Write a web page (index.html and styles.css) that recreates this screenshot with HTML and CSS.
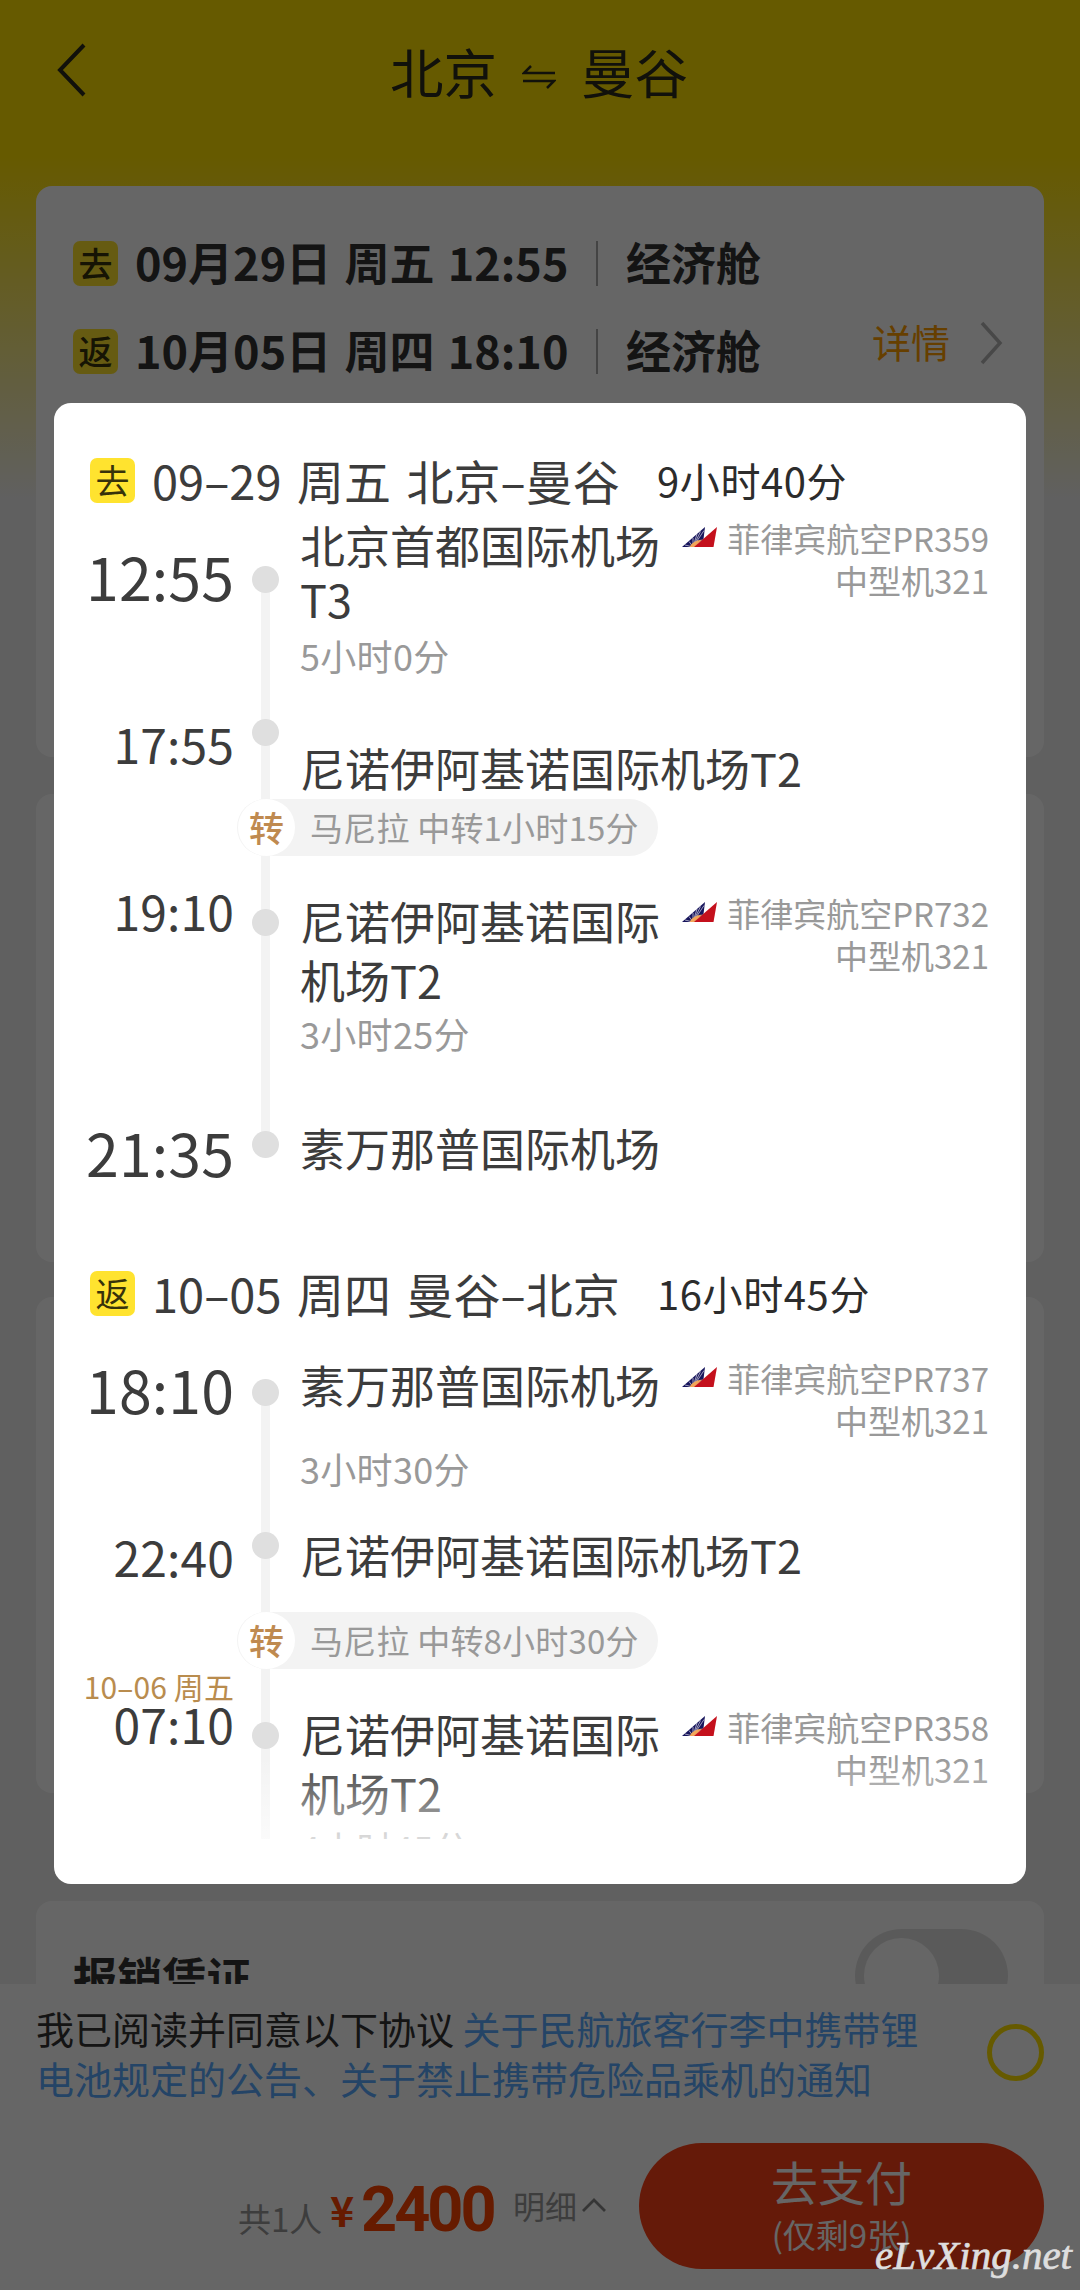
FILE: index.html
```html
<!DOCTYPE html>
<html lang="zh-CN">
<head>
<meta charset="utf-8">
<title>北京 ⇋ 曼谷</title>
<link rel="stylesheet" href="styles.css">
</head>
<body>
<svg class="defs" width="0" height="0" aria-hidden="true">
  <symbol id="pal" viewBox="0 0 35 20">
    <path d="M0 20 23 0 21.500 12 11 20z" fill="#17155c"/>
    <path d="M11 20 3 18M11 20 7 14.500M11 20 11 11M11 20 15 7M11 20 18.500 4.500M11 20 22 3.500" stroke="#fff" stroke-width=".6"/>
    <path d="M7.500 20q2.500-6 12.500-7.500L13 20z" fill="#f2a65a"/>
    <path d="M12 20 35 0 31.500 20z" fill="#c4101c"/>
  </symbol>
</svg>
<div class="page">
  <main class="scroll">
    <header class="topbar">
      <svg class="back" viewBox="0 0 30 54"><path d="M27 2 3 27l24 25"/></svg>
      <h1 class="title"><span>北京</span>
        <svg class="swap" viewBox="0 0 34 24"><path d="M33 8H2L9 1M1 16h31l-7 7"/></svg>
        <span>曼谷</span></h1>
    </header>
    <section class="card trips">
      <div class="trip-list">
        <div class="trip"><span class="tag">去</span><span class="trip-date">09月29日 周五 12:55</span><i class="bar"></i><span class="cabin">经济舱</span></div>
        <div class="trip"><span class="tag">返</span><span class="trip-date">10月05日 周四 18:10</span><i class="bar"></i><span class="cabin">经济舱</span></div>
      </div>
      <div class="detail">详情<svg viewBox="0 0 24 44"><path d="M2 2 20 22 2 42"/></svg></div>
    </section>
    <section class="card second"></section>
    <section class="card third"></section>
    <section class="card receipt"><h2>报销凭证</h2><div class="toggle"><i></i></div></section>
  </main>
  <footer class="footer">
    <div class="agree">
      <p><span>我已阅读并同意以下协议 </span><a>关于民航旅客行李中携带锂</a><br><a>电池规定的公告、关于禁止携带危险品乘机的通知</a></p>
      <i class="ring"></i>
    </div>
    <div class="pay">
      <span class="people">共1人</span>
      <span class="yen">¥</span>
      <span class="price">2400</span>
      <span class="breakdown">明细</span>
      <svg class="caret" viewBox="0 0 24 14"><path d="M1 13 12 2l11 11"/></svg>
      <div class="btn"><b>去支付</b><small>(仅剩9张)</small></div>
    </div>
  </footer>
</div>
<div class="mask"></div>

<section class="modal">
  <div class="itinerary">
    <div class="head"><span class="tag">去</span><span class="route">09–29 周五 北京–曼谷</span><span class="total">9小时40分</span></div>

    <div class="stop a1">
      <div class="time big">12:55</div>
      <div class="axis first"><i class="dot"></i></div>
      <div class="place tight"><p>北京首都国际机场<br>T3</p><p class="dur">5小时0分</p></div>
      <div class="flight"><p><svg class="logo"><use href="#pal"/></svg>菲律宾航空PR359</p><p>中型机321</p></div>
    </div>
    <div class="stop a2">
      <div class="time">17:55</div>
      <div class="axis"><i class="dot"></i></div>
      <div class="place wide"><p>尼诺伊阿基诺国际机场T2</p></div>
    </div>
    <div class="transfer"><b>转</b><span>马尼拉 中转1小时15分</span></div>
    <div class="stop a3">
      <div class="time">19:10</div>
      <div class="axis"><i class="dot"></i></div>
      <div class="place"><p>尼诺伊阿基诺国际机场T2</p><p class="dur">3小时25分</p></div>
      <div class="flight"><p><svg class="logo"><use href="#pal"/></svg>菲律宾航空PR732</p><p>中型机321</p></div>
    </div>
    <div class="stop a4">
      <div class="time big">21:35</div>
      <div class="axis last"><i class="dot"></i></div>
      <div class="place"><p>素万那普国际机场</p></div>
    </div>

    <div class="head"><span class="tag">返</span><span class="route">10–05 周四 曼谷–北京</span><span class="total">16小时45分</span></div>

    <div class="stop b1">
      <div class="time big">18:10</div>
      <div class="axis first"><i class="dot"></i></div>
      <div class="place"><p>素万那普国际机场</p><p class="dur">3小时30分</p></div>
      <div class="flight"><p><svg class="logo"><use href="#pal"/></svg>菲律宾航空PR737</p><p>中型机321</p></div>
    </div>
    <div class="stop b2">
      <div class="time">22:40</div>
      <div class="axis"><i class="dot"></i></div>
      <div class="place wide"><p>尼诺伊阿基诺国际机场T2</p></div>
    </div>
    <div class="transfer"><b>转</b><span>马尼拉 中转8小时30分</span></div>
    <div class="stop b3">
      <div class="time"><em>10–06 周五</em>07:10</div>
      <div class="axis"><i class="dot"></i></div>
      <div class="place"><p>尼诺伊阿基诺国际机场T2</p><p class="dur">4小时45分</p></div>
      <div class="flight"><p><svg class="logo"><use href="#pal"/></svg>菲律宾航空PR358</p><p>中型机321</p></div>
    </div>
    <div class="fade"></div>
  </div>
</section>
<div class="watermark">eLvXing.net</div>
</body>
</html>
```
FILE: styles.css
```css
* { box-sizing: border-box; }
body {
  margin: 0;
  position: relative;
  width: 1080px;
  height: 2290px;
  overflow: hidden;
  font-family: "Noto Sans CJK SC", sans-serif;
  color: #333;
}
h1, h2, p { margin: 0; font-weight: 400; }
i, em { font-style: normal; }
svg { fill: none; flex: none; }
.defs { position: absolute; }

/* order page */
.page { height: 2290px; display: flex; flex-direction: column; }
.scroll {
  height: 1984px;
  padding: 0 36px;
  overflow: hidden;
  background: linear-gradient(#ffe100 0, #ffe100 155px, #f1f1f1 500px);
}
.topbar { height: 186px; display: flex; }
.back { width: 30px; height: 54px; margin: 43px 0 0 21px; stroke: #2b2b1c; stroke-width: 4; }
.title {
  display: flex;
  align-items: center;
  gap: 25px;
  height: 80px;
  margin: 30px 0 0 303px;
  font-size: 53.5px;
  color: #2b2b1c;
}
.swap { width: 34px; height: 24px; margin-top: 14px; stroke: #2b2b1c; stroke-width: 2.5; }
.card { background: #fff; border-radius: 16px; }
.trips { height: 571px; display: flex; justify-content: space-between; padding: 42px 40px 0 37px; }
.trip-list { display: flex; flex-direction: column; gap: 18px; }
.trip { height: 70px; display: flex; align-items: center; font-size: 45px; font-weight: 700; }
.tag {
  width: 45px;
  height: 45px;
  border-radius: 7px;
  background: #ffe32f;
  color: #37320a;
  font-size: 34px;
  font-weight: 500;
  line-height: 43px;
  text-align: center;
  flex: none;
}
.trip-date, .cabin { line-height: 60px; padding-bottom: 3px; }
.trip-date { width: 460px; margin-left: 17px; white-space: nowrap; word-spacing: 3px; }
.bar { width: 2px; height: 45px; background: #aaa; margin: 0 28px 0 1px; }
.detail { display: flex; align-items: center; height: 60px; margin-top: 83px; font-size: 39px; line-height: 56px; color: #ff9d00; }
.detail svg { width: 24px; height: 44px; margin: 3px 0 0 30px; stroke: #b5b5b5; stroke-width: 3.5; }
.second { height: 468px; margin-top: 37px; }
.third { height: 496px; margin-top: 35px; }
.receipt { height: 200px; margin-top: 108px; padding: 28px 36px 0 37px; display: flex; justify-content: space-between; }
.receipt h2 { font-size: 44.5px; line-height: 60px; font-weight: 700; margin-top: 17px; }
.toggle { width: 153px; height: 93px; border-radius: 47px; padding: 9px; background: #e2e2e2; }
.toggle i { display: block; width: 75px; height: 75px; border-radius: 50%; background: #fff; }

.footer { height: 306px; background: #fff; padding: 19px 36px 0; }
.agree { height: 140px; display: flex; justify-content: space-between; font-size: 38px; line-height: 50px; }
.agree p { white-space: nowrap; }
.agree a { color: #5aaaff; }
.ring { width: 57px; height: 57px; border: 5px solid #ffe100; border-radius: 50%; margin-top: 21px; }
.pay { display: flex; height: 126px; padding-left: 202px; line-height: 1; white-space: nowrap; color: #999; }
.people { width: 92px; margin-top: 59px; font-size: 33px; }
.yen { width: 31px; margin-top: 46px; font-size: 41px; font-weight: 700; color: #ff4400; }
.price { width: 152px; margin-top: 35px; font: 700 63px/1 Roboto, sans-serif; color: #ff4400; letter-spacing: -3px; }
.breakdown { width: 69px; margin-top: 46px; font-size: 32px; }
.caret { width: 24px; height: 14px; margin-top: 55px; stroke: #888; stroke-width: 2.8; }
.btn {
  width: 405px;
  margin-left: auto;
  border-radius: 63px;
  background: #fd4218;
  color: #fff;
  display: flex;
  flex-direction: column;
  align-items: center;
  padding-top: 13px;
}
.btn b { font-size: 47px; font-weight: 400; line-height: 50px; }
.btn small { font-size: 33px; line-height: 40px; margin-top: 8px; }

.mask { position: absolute; inset: 0; background: rgba(0, 0, 0, .6); }

/* itinerary dialog */
.modal {
  position: absolute;
  left: 54px;
  top: 403px;
  width: 972px;
  height: 1481px;
  border-radius: 17px;
  background: #fff;
  color: #3c3c3c;
}
.itinerary { height: 1436px; padding: 42px 37px 0 24px; overflow: hidden; position: relative; }
.head { height: 70px; display: flex; align-items: center; padding-left: 12px; margin-bottom: 2px; }
.head .tag { font-weight: 400; line-height: 44px; margin-top: 1px; }
.route, .total { line-height: 64px; white-space: nowrap; }
.route { width: 505px; margin-left: 17px; font-size: 47px; word-spacing: 5px; }
.total { font-size: 40px; color: #2c2c2c; letter-spacing: .6px; }
.stop { display: flex; }
.time { width: 156px; text-align: right; font-size: 48px; line-height: 60px; white-space: nowrap; letter-spacing: .1px; }
.time.big { font-size: 59px; }
.time em { display: block; font-size: 30px; line-height: 36px; color: #b98c4e; }
.axis { width: 9px; margin: 0 30px 0 27px; display: flex; justify-content: center; background: #f3f3f3; }
.dot { flex: none; width: 27px; height: 27px; border-radius: 50%; background: #dfdfdf; }
.place { width: 372px; font-size: 45px; line-height: 58.5px; }
.place.wide { width: 560px; white-space: nowrap; }
.place.tight { line-height: 54px; }
.dur { font-size: 36px; line-height: 50px; color: #999; letter-spacing: .3px; }
.flight { flex: 1; text-align: right; font-size: 33px; line-height: 42px; color: #999; white-space: nowrap; }
.flight p { display: flex; justify-content: flex-end; align-items: center; }
.logo { width: 35px; height: 20px; margin: -3px 10px 0 0; }
.transfer {
  width: 421px;
  height: 57px;
  margin-left: 159px;
  border-radius: 29px;
  background: #f3f3f3;
  display: flex;
  align-items: center;
  font-size: 33px;
  color: #999;
  white-space: nowrap;
  letter-spacing: .2px;
}
.transfer span { line-height: 44px; padding-bottom: 1px; }
.transfer b {
  width: 57px;
  height: 57px;
  margin: 0 15px 0 1px;
  border-radius: 50%;
  background: #fff;
  color: #bf8a50;
  font-size: 35px;
  font-weight: 500;
  line-height: 56px;
  text-align: center;
}
.fade {
  position: absolute;
  left: 0;
  right: 0;
  bottom: 0;
  height: 82px;
  background: linear-gradient(rgba(255, 255, 255, 0), rgba(255, 255, 255, .64));
}

/* outbound rows */
.a1 { height: 183px; }
.a1 .time { margin-top: 29px; }
.a1 .axis { margin-top: 62px; }
.a1 .axis .dot, .b1 .axis .dot { margin-top: -13px; }
.a1 .place { margin-top: 1px; }
.a1 .dur { margin-top: 4px; }
.a1 .flight { margin-top: 0; }
.a2 { height: 99px; }
.a2 .time { margin-top: 13px; }
.a2 .dot { margin-top: 19px; }
.a2 .place { margin-top: 39px; }
.a3 { height: 244px; }
.a3 .time { margin-top: 24px; }
.a3 .dot { margin-top: 53px; }
.a3 .place { margin-top: 36px; }
.a3 .dur { margin-top: -1px; }
.a3 .flight { margin-top: 36px; }
.a4 { height: 158px; }
.a4 .time { margin-top: 22px; }
.a4 .axis { height: 45px; align-items: flex-end; }
.a4 .dot { margin-bottom: -13px; }
.a4 .place { margin-top: 19px; }

/* return rows */
.b1 { height: 183px; }
.b1 .time { margin-top: 29px; }
.b1 .axis { margin-top: 62px; }
.b1 .place { margin-top: 26px; }
.b1 .dur { margin-top: 28px; }
.b1 .flight { margin-top: 27px; }
.b2 { height: 99px; }
.b2 .time { margin-top: 13px; }
.b2 .dot { margin-top: 19px; }
.b2 .place { margin-top: 13px; }
.b3 { height: 260px; }
.b3 .time em { margin: -1px 0 -11px; }
.b3 .dot { margin-top: 53px; }
.b3 .place { margin-top: 36px; }
.b3 .flight { margin-top: 37px; }

.watermark {
  position: absolute;
  left: 875px;
  top: 2231px;
  font: italic 400 41px/48px "Liberation Serif", serif;
  -webkit-text-stroke: .7px #dedede;
  color: #dedede;
}
```
